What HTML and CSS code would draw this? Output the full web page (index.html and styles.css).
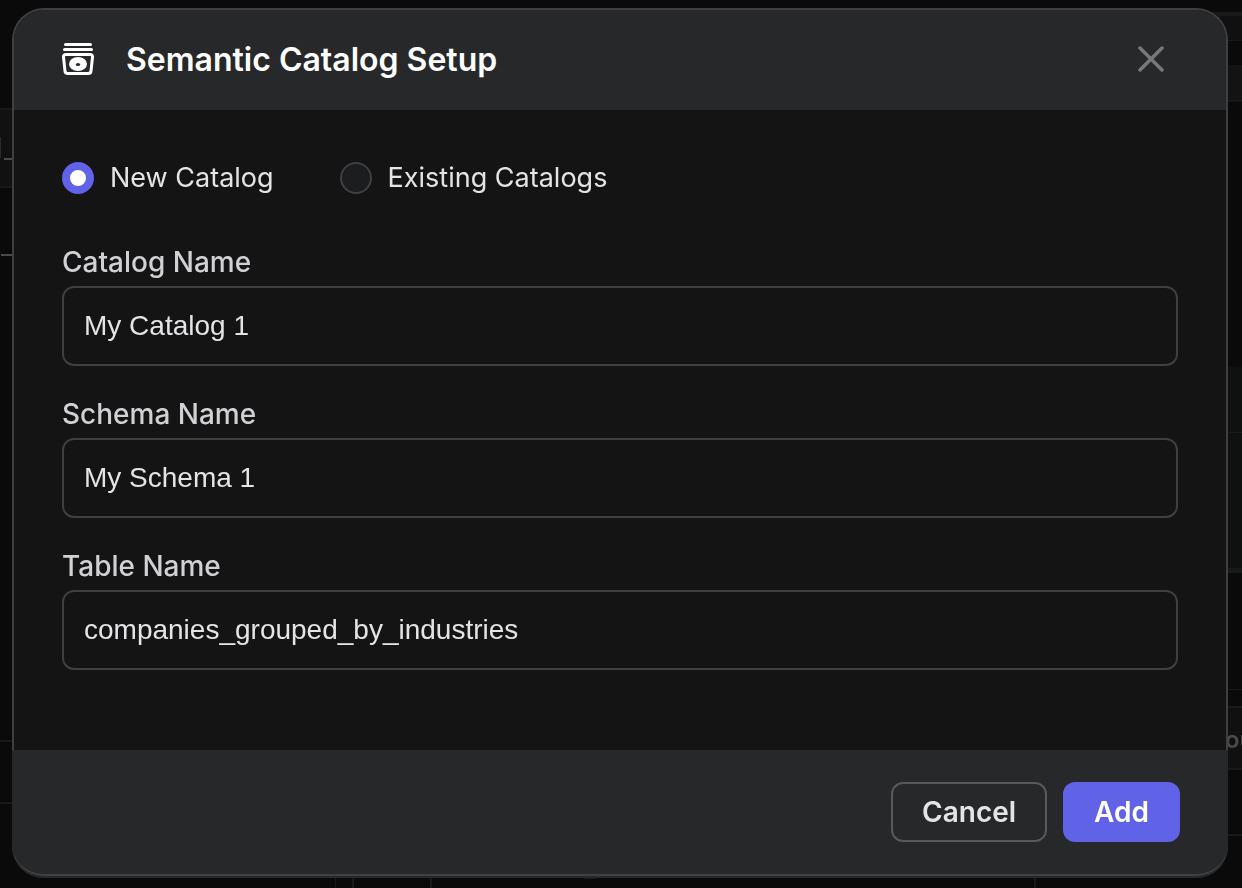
FILE: index.html
```html
<!DOCTYPE html>
<html lang="en">
<head>
<meta charset="utf-8">
<meta name="viewport" content="width=device-width, initial-scale=1">
<title>Semantic Catalog Setup</title>
<link rel="stylesheet" href="styles.css">
</head>
<body>
<div class="backdrop" aria-hidden="true">
  <svg class="backdrop-edge" width="621" height="888" viewBox="0 0 621 888">
    <path fill="#111" d="M0 110h14v76H0z"/>
    <path fill="#191919" d="M0 108h14v2H0zM0 186h14v2H0zM0 740h14v2H0zM0 802h14v2H0zM335 876h1v12h-1zM352 876h2v12h-2zM430 876h2v12h-2zM584 876h12v3h-12z"/>
    <path fill="#2b2b2b" d="M0 137h1v21H0z"/>
    <path fill="#4a4a4a" d="M4 158h9v2H4zM1 254h12v2H1z"/>
  </svg>
  <svg class="backdrop-edge" width="621" height="888" viewBox="621 0 621 888">
    <path fill="#101010" d="M1200 16h42v25h-42zM1226 708h16v60h-16z"/>
    <path fill="#131313" d="M1226 65h16v37h-16z"/>
    <path fill="#0e1110" d="M1226 367h16v206h-16z"/>
    <path fill="#191919" d="M1200 12h42v4h-42zM1226 40h16v1h-16zM1226 100h16v1h-16zM1226 432h16v1h-16zM1226 568h16v5h-16zM1226 689h16v1h-16zM1226 706h16v2h-16zM1226 768h16v2h-16zM1226 834h16v2h-16zM1034 876h2v12h-2z"/>
    <text class="backdrop-text" x="1225" y="748">ou</text>
  </svg>
</div>
<main class="stage">
  <form class="dialog" role="dialog" aria-labelledby="dialog-title">
    <header class="dialog-header">
      <svg class="dialog-icon" viewBox="0 0 32 34" aria-hidden="true">
        <path d="M3.500 1.500h25M2.500 6.500h27" fill="none" stroke="#fff" stroke-width="3" stroke-linecap="round"/>
        <path d="M4 11.500h24q2.800 0 2.500 2.700l-1.500 13.800q-.3 2.500-2.700 2.500H5.700Q3.300 30.500 3 28L1.500 14.200Q1.200 11.500 4 11.500z" fill="none" stroke="#fff" stroke-width="3"/>
        <ellipse cx="16" cy="21" rx="9" ry="7" fill="#fff"/>
        <ellipse cx="16" cy="21.500" rx="2.200" ry="1.600" fill="#27282a"/>
      </svg>
      <h1 class="dialog-title" id="dialog-title">Semantic Catalog Setup</h1>
      <button class="close" type="button" aria-label="Close">
        <svg width="26" height="28" viewBox="0 0 26 28" aria-hidden="true"><path d="M2 2l22 22M24 2L2 24" fill="none" stroke="#77787b" stroke-width="3.500" stroke-linecap="round"/></svg>
      </button>
    </header>
    <div class="dialog-body">
      <div class="choices" role="radiogroup" aria-label="Catalog type">
        <label class="choice"><input class="radio" type="radio" name="catalog-type" checked>New Catalog</label>
        <label class="choice"><input class="radio" type="radio" name="catalog-type">Existing Catalogs</label>
      </div>
      <div class="field">
        <label class="field-label" for="catalog">Catalog Name</label>
        <input class="field-input" id="catalog" type="text" value="My Catalog 1">
      </div>
      <div class="field">
        <label class="field-label" for="schema">Schema Name</label>
        <input class="field-input" id="schema" type="text" value="My Schema 1">
      </div>
      <div class="field">
        <label class="field-label" for="table">Table Name</label>
        <input class="field-input" id="table" type="text" value="companies_grouped_by_industries" spellcheck="false">
      </div>
    </div>
    <footer class="dialog-footer">
      <button class="button" type="button">Cancel</button>
      <button class="button button-primary" type="submit">Add</button>
    </footer>
  </form>
</main>
</body>
</html>
```
FILE: styles.css
```css
* {
  box-sizing: border-box;
}

body {
  margin: 0;
  background: #0a0a0a;
  color: #e4e4e7;
  font-family: Inter, "Liberation Sans", sans-serif;
  font-size: 28px;
}

.backdrop {
  position: fixed;
  inset: 0;
  z-index: -1;
  display: flex;
  justify-content: space-between;
  overflow: hidden;
}

.backdrop-edge {
  flex: none;
}

.backdrop-text {
  fill: #4a4a4a;
  font-size: 24px;
  font-weight: 600;
}

.stage {
  display: flex;
  min-height: 100vh;
  padding: 8px 14px 10px 12px;
}

.dialog {
  display: flex;
  flex: 1;
  flex-direction: column;
  background: #141414;
  border: 2px solid #3f3f43;
  border-bottom: 0;
  border-radius: 32px;
}

.dialog-header {
  display: flex;
  align-items: center;
  height: 100px;
  padding: 0 62px 0 48px;
  background: #27282a;
  border-radius: 30px 30px 0 0;
}

.dialog-icon {
  width: 32px;
  height: 34px;
}

.dialog-title {
  flex: 1;
  margin: 0 0 0 32px;
  color: #fff;
  font-size: 32px;
  font-weight: 600;
  line-height: 40px;
}

.close {
  display: flex;
  padding: 0;
  background: none;
  border: 0;
  cursor: pointer;
}

.dialog-body {
  display: flex;
  flex: 1;
  flex-direction: column;
  gap: 32px;
  padding: 48px;
}

.choices {
  display: flex;
  gap: 66px;
  margin-bottom: 16px;
}

.choice {
  display: flex;
  align-items: center;
  gap: 16px;
  font-size: 27px;
  line-height: 40px;
}

.radio {
  width: 32px;
  height: 32px;
  margin: 0;
  appearance: none;
  background: #1c1d1f;
  border: 2px solid #3f3f43;
  border-radius: 50%;
}

.radio:checked {
  background: #fff;
  border: 8px solid #6062e8;
}

.field {
  display: flex;
  flex-direction: column;
  gap: 8px;
}

.field-label {
  color: #d0d0d5;
  font-weight: 500;
  line-height: 32px;
}

.field-input {
  width: 100%;
  height: 80px;
  padding: 0 20px;
  background: #141414;
  border: 2px solid #3f3f43;
  border-radius: 12px;
  color: #e4e4e7;
  font-family: "Liberation Sans", Arial, sans-serif;
  font-size: 28px;
}

.dialog-footer {
  display: flex;
  justify-content: flex-end;
  gap: 16px;
  margin: 0 -2px 2px;
  padding: 32px 48px;
  background: #27282a;
  border-bottom: 2px solid #3f4043;
  border-radius: 0 0 32px 32px;
  box-shadow: 0 2px 0 #27282a;
}

.button {
  height: 60px;
  padding: 0 29px;
  background: none;
  border: 2px solid #58595b;
  border-radius: 12px;
  color: #e4e4e7;
  font: 600 28px/34px Inter, "Liberation Sans", sans-serif;
  cursor: pointer;
}

.button-primary {
  background: #6062e8;
  border-color: #6062e8;
  color: #fff;
}
```
